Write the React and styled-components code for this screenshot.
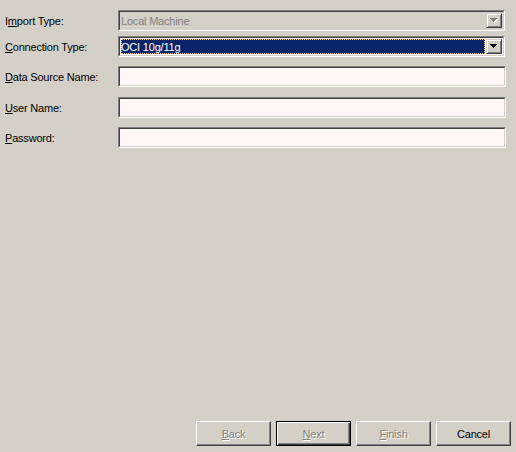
import React from "react";
import styled, { createGlobalStyle, css } from "styled-components";

const GlobalStyle = createGlobalStyle`
  html, body {
    margin: 0;
    padding: 0;
    background: #d4d0c8;
  }
  body {
    font-family: Tahoma, "Liberation Sans", Arial, sans-serif;
    font-size: 11px;
    letter-spacing: -0.2px;
    color: #000;
  }
`;

const Page = styled.div`
  width: 516px;
  height: 452px;
  display: flex;
  flex-direction: column;
  background: #d4d0c8;
  box-sizing: border-box;
`;

const Form = styled.div`
  flex: 1;
  display: flex;
  flex-direction: column;
  padding: 10px 10px 0 5px;
`;

const Row = styled.div`
  display: flex;
  align-items: center;
  height: 21px;
  margin-top: ${p => p.$gap || 0}px;
`;

const Label = styled.label`
  width: 113px;
  flex-shrink: 0;
  white-space: nowrap;
  padding-top: 1px;
`;

const Key = styled.span`
  text-decoration: underline;
  text-underline-offset: 1px;
`;

const sunken = css`
  box-sizing: border-box;
  border-style: solid;
  border-width: 1px;
  border-color: #808080 #ffffff #ffffff #808080;
  height: 21px;
`;

const Inner = styled.div`
  flex: 1;
  height: 100%;
  box-sizing: border-box;
  border-style: solid;
  border-width: 1px;
  border-color: #404040 #d4d0c8 #d4d0c8 #404040;
  display: flex;
  align-items: center;
  background: ${p => (p.$disabled ? "#d4d0c8" : "#fff7f7")};
  padding: 1px;
`;

const Combo = styled.div`
  ${sunken};
  width: 387px;
  display: flex;
`;

const TextBox = styled.div`
  ${sunken};
  width: 388px;
  display: flex;
`;

const Value = styled.div`
  flex: 1;
  height: 100%;
  box-sizing: border-box;
  display: flex;
  align-items: center;
  padding-left: 0;
  white-space: nowrap;
  color: ${p => (p.$disabled ? "#808080" : "#000")};
  ${p =>
    p.$selected &&
    css`
      background: #0a246a;
      color: #fff;
      outline: 1px dotted #f5db95;
      outline-offset: -1px;
    `}
`;

const DropButton = styled.div`
  width: 16px;
  height: 100%;
  box-sizing: border-box;
  flex-shrink: 0;
  background: #d4d0c8;
  border-style: solid;
  border-width: 1px;
  border-color: #d4d0c8 #404040 #404040 #d4d0c8;
  box-shadow: inset 1px 1px 0 #ffffff, inset -1px -1px 0 #808080;
  display: flex;
  align-items: center;
  justify-content: center;
  margin-left: 1px;
`;

const Arrow = ({ disabled }) => (
  <svg width="8" height="5" viewBox="0 0 8 5">
    {disabled && <path d="M2 1h6v1H7v1H6v1H5v1H4V4H3V2H2z" fill="#fff" />}
    <path
      d="M0 0h7v1H6v1H5v1H4v1H3V3H2V2H1V1H0z"
      fill={disabled ? "#808080" : "#000"}
    />
  </svg>
);

const Footer = styled.div`
  display: flex;
  justify-content: flex-end;
  gap: 5px;
  padding: 0 5px 6px 0;
`;

const Button = styled.button`
  width: 75px;
  height: 25px;
  box-sizing: border-box;
  padding: 0;
  font: inherit;
  letter-spacing: inherit;
  background: #d4d0c8;
  border-style: solid;
  border-width: 1px;
  border-color: #ffffff #404040 #404040 #ffffff;
  box-shadow: inset -1px -1px 0 #808080;
  color: #000;
  ${p =>
    p.$default &&
    css`
      border: 1px solid #000;
      box-shadow: inset 1px 1px 0 #ffffff, inset -1px -1px 0 #404040,
        inset -2px -2px 0 #808080;
    `}
  ${p =>
    p.disabled &&
    css`
      color: #808080;
      text-shadow: 1px 1px 0 #ffffff;
    `}
`;

export default function App() {
  return (
    <Page>
      <GlobalStyle />
      <Form>
        <Row>
          <Label>
            I<Key>m</Key>port Type:
          </Label>
          <Combo>
            <Inner $disabled>
              <Value $disabled>Local Machine</Value>
              <DropButton>
                <Arrow disabled />
              </DropButton>
            </Inner>
          </Combo>
        </Row>
        <Row $gap={5}>
          <Label>
            <Key>C</Key>onnection Type:
          </Label>
          <Combo>
            <Inner>
              <Value $selected>OCI 10g/11g</Value>
              <DropButton>
                <Arrow />
              </DropButton>
            </Inner>
          </Combo>
        </Row>
        <Row $gap={9}>
          <Label>
            <Key>D</Key>ata Source Name:
          </Label>
          <TextBox>
            <Inner />
          </TextBox>
        </Row>
        <Row $gap={10}>
          <Label>
            <Key>U</Key>ser Name:
          </Label>
          <TextBox>
            <Inner />
          </TextBox>
        </Row>
        <Row $gap={9}>
          <Label>
            <Key>P</Key>assword:
          </Label>
          <TextBox>
            <Inner />
          </TextBox>
        </Row>
      </Form>
      <Footer>
        <Button disabled>
          <Key>B</Key>ack
        </Button>
        <Button disabled $default>
          <Key>N</Key>ext
        </Button>
        <Button disabled>
          <Key>F</Key>inish
        </Button>
        <Button>Cancel</Button>
      </Footer>
    </Page>
  );
}
